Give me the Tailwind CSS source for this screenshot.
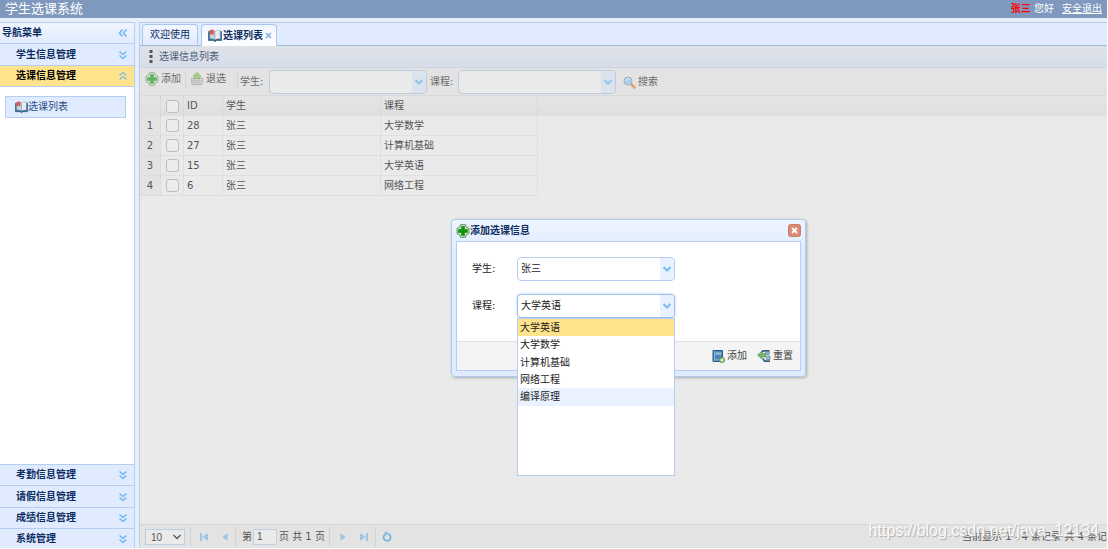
<!DOCTYPE html>
<html lang="zh-CN">
<head>
<meta charset="utf-8">
<title>学生选课系统</title>
<script src="https://cdn.jsdelivr.net/npm/@tailwindcss/browser@4"></script>
</head>
<body class="h-screen overflow-hidden bg-white pr-px pb-px font-['DejaVu_Sans','Noto_Sans_CJK_SC',sans-serif] text-[10px] leading-4 text-[#222]">
<svg class="hidden">
  <symbol id="chev" viewBox="0 0 10 8"><path d="M1.500 2 5 5.500 8.500 2" fill="none" stroke="currentColor" stroke-width="2"/></symbol>
  <symbol id="down2" viewBox="0 0 10 10"><path d="M1.500 1.500 5 4.500 8.500 1.500M1.500 5.500 5 8.500 8.500 5.500" fill="none" stroke="#72b8f2" stroke-width="1.600"/></symbol>
  <symbol id="plus" viewBox="0 0 14 14"><path d="M4.500.7h5L10 3l3 1.500v5L10 11l-.5 2.300h-5L4 11 1 9.500v-5L4 3z" fill="#d5ead2" stroke="#5d935d" stroke-width="1"/><path d="M5.500 2.500h3v3h3v3h-3v3h-3v-3h-3v-3h3z" fill="#0c960c" stroke="#0c800c" stroke-width=".6"/></symbol>
  <symbol id="book" viewBox="0 0 14 14"><path d="M.3 2.500v9h5.200l1.500 1.200 1.500-1.200h5.200v-9z" fill="#2d6791" stroke="#23547a" stroke-width=".6"/><path d="M1.800 1.500C4 1 6 1.500 7 2.500v8.200C5.500 9.700 3.500 9.600 1.800 10z" fill="#c9d8e4" stroke="#7893a8" stroke-width=".5"/><path d="M12.200 1.500C10 1 8 1.500 7 2.500v8.200c1.500-1 3.500-1.100 5.200-.7z" fill="#f2f4f5" stroke="#7893a8" stroke-width=".5"/><path d="M2 .8h3.800v5.400L3.900 4.900 2 6.200z" fill="#e4564d"/><path d="M8.500 4.500h2.500M8.500 6.500h2.500" stroke="#c5ced5" stroke-width=".7"/></symbol>
</svg>
<div class="flex h-full flex-col overflow-hidden bg-[#e6eef8]">
  <header class="flex h-[18px] shrink-0 items-center bg-[#7f99be] pr-[5px] pl-[5px] text-white">
    <h1 class="text-[13px]">学生选课系统</h1>
    <p class="ml-auto"><b class="text-[#f00]">张三</b> 您好</p>
    <a href="#" class="ml-2 underline">安全退出</a>
  </header>
  <div class="mt-1 flex min-h-0 flex-1 gap-1">
    <nav class="flex w-[135px] shrink-0 flex-col border-t border-r border-[#b5cdf0] bg-white font-bold text-[#0e2d5f]">
      <div class="flex h-[21px] shrink-0 items-center justify-between border-b border-[#b5cdf0] bg-linear-to-b from-[#f0f5ff] to-[#e0ebff] pr-[6px] pl-[2px]">导航菜单
        <button aria-label="收起"><svg class="size-[10px] rotate-90"><use href="#down2"/></svg></button></div>
      <button class="flex h-[22px] shrink-0 items-center justify-between border-b border-[#b5cdf0] bg-[#e0ebff] pr-[6px] pl-4">学生信息管理<svg class="size-[10px]"><use href="#down2"/></svg></button>
      <button class="flex h-[21px] shrink-0 items-center justify-between border-b border-[#b5cdf0] bg-[#ffe48d] pr-[6px] pl-4 text-black">选课信息管理<svg class="size-[10px] rotate-180 opacity-80"><use href="#down2"/></svg></button>
      <div class="flex-1 py-[9px] pr-2 pl-[5px]">
        <a href="#" class="flex h-[22px] items-center border border-[#b5cdf0] bg-[#e0ebff] pl-[9px] font-normal text-[#2c4d80]"><svg class="size-[13px]"><use href="#book"/></svg>选课列表</a>
      </div>
      <button class="flex h-[21px] shrink-0 items-center justify-between border-t border-[#b5cdf0] bg-[#e0ebff] pr-[6px] pl-4">考勤信息管理<svg class="size-[10px]"><use href="#down2"/></svg></button>
      <button class="flex h-[22px] shrink-0 items-center justify-between border-t border-[#b5cdf0] bg-[#e0ebff] pr-[6px] pl-4">请假信息管理<svg class="size-[10px]"><use href="#down2"/></svg></button>
      <button class="flex h-[21px] shrink-0 items-center justify-between border-t border-[#b5cdf0] bg-[#e0ebff] pr-[6px] pl-4">成绩信息管理<svg class="size-[10px]"><use href="#down2"/></svg></button>
      <button class="flex h-5 shrink-0 items-center justify-between border-t border-[#b5cdf0] bg-[#e0ebff] pr-[6px] pl-4">系统管理<svg class="size-[10px]"><use href="#down2"/></svg></button>
    </nav>
    <main class="flex min-w-0 flex-1 flex-col border-t border-l border-[#b5cdf0] bg-[#eaeaea] text-[#6a6a6a]">
      <div class="flex h-[23px] shrink-0 items-end gap-[3px] border-b border-[#a3b9da] bg-[#e0ebff] pl-[2px] text-[#0e2d5f]">
        <button class="h-[21px] rounded-t border border-b-0 border-[#aac6ee] bg-linear-to-b from-[#f2f7ff] to-[#e0ebff] px-[7px]">欢迎使用</button>
        <div class="-mb-px flex h-[22px] items-center rounded-t border border-b-0 border-[#aac6ee] bg-linear-to-b from-[#eff5ff] to-white pr-1 pl-[6px] font-bold">
          <svg class="mr-px size-[14px]"><use href="#book"/></svg>选课列表
          <button aria-label="关闭标签" class="ml-[2px] flex"><svg class="size-[7px]" viewBox="0 0 7 7"><path d="m1 1 5 5M6 1 1 6" stroke="#86a9d6" stroke-width="1.400"/></svg></button>
        </div>
      </div>
      <div class="flex h-[22px] shrink-0 items-center border-b border-[#ccd4df] bg-linear-to-b from-[#dfe2e8] to-[#d7dde9] pl-[9px] text-[#4b5c78]">
        <svg class="mr-[6px] h-[13px] w-1" viewBox="0 0 4 13"><path d="M.5 0h3v3h-3zM.5 5h3v3h-3zM.5 10h3v3h-3z" fill="#555"/></svg>选课信息列表</div>
      <div class="flex h-[28px] shrink-0 items-start border-b border-[#dadada] bg-[#e3e3e3] pt-[2px]">
        <button class="flex h-[18px] items-center pl-[5px]"><svg class="mr-[2px] size-[14px] opacity-60"><use href="#plus"/></svg>添加</button>
        <span class="mx-[4px] mt-px h-[18px] w-px bg-[#d2d2d2]"></span>
        <button class="flex h-[18px] items-center"><svg class="mr-[2px] size-[14px] opacity-70" viewBox="0 0 14 14"><path d="M1.200 6.500h11.600l-1 6.300H2.200z" fill="#d4d6d8" stroke="#888" stroke-width=".7"/><path d="M1.500 8.500h11M2 10.600h10M4.500 7l.3 5.500M7 7v5.500M9.500 7l-.3 5.500" stroke="#a0a2a4" stroke-width=".6"/><path d="M7 .5 10.800 4 9.500 6.500h-5L3.200 4z" fill="#8fc263" stroke="#6a9a4c" stroke-width=".6"/></svg>退选</button>
        <span class="mr-[2px] ml-[11px] mt-px h-[18px] w-px bg-[#d2d2d2]"></span>
        <label for="qs" class="w-[29px] whitespace-nowrap pt-[4px]">学生:</label>
        <div class="relative"><select id="qs" class="h-6 w-[158px] appearance-none rounded border border-[#bccde2] bg-[#eaeaea] pl-1"><option></option></select>
          <span class="pointer-events-none absolute top-px right-px flex h-[22px] w-[14px] items-center justify-center rounded-r bg-[#dbe3ef] text-[#91c5eb]"><svg class="h-2 w-[10px]"><use href="#chev"/></svg></span></div>
        <label for="qc" class="ml-[3px] w-[28px] whitespace-nowrap pt-[4px]">课程:</label>
        <div class="relative"><select id="qc" class="h-6 w-[158px] appearance-none rounded border border-[#bccde2] bg-[#eaeaea] pl-1"><option></option></select>
          <span class="pointer-events-none absolute top-px right-px flex h-[22px] w-[14px] items-center justify-center rounded-r bg-[#dbe3ef] text-[#91c5eb]"><svg class="h-2 w-[10px]"><use href="#chev"/></svg></span></div>
        <button class="ml-[7px] flex h-6 items-center"><svg class="mr-[2px] size-[13px]" viewBox="0 0 13 13"><path d="m8 8 3.500 3.500" stroke="#dda46b" stroke-width="2.600" stroke-linecap="round"/><circle cx="5" cy="5" r="4" fill="#a9d0f2" stroke="#a5aebb"/><path d="M2.500 4.500Q3.500 2 6 2.500" stroke="#dceefa" fill="none"/></svg>搜索</button>
      </div>
      <div class="min-h-0 flex-1">
        <div class="bg-linear-to-b from-[#e5e5e5] from-0% to-[#dfdfdf] to-[20px] bg-no-repeat [background-size:100%_20px]">
        <table class="w-[398px] table-fixed border-separate border-spacing-0 text-left text-[#555]">
          <colgroup><col class="w-[21px]"><col class="w-[23px]"><col class="w-[39px]"><col class="w-[158px]"><col class="w-[157px]"></colgroup>
          <thead><tr class="h-5 *:border-r *:border-dotted *:border-[#d2d2d2] *:p-0 *:font-normal">
            <th></th><th><input type="checkbox" aria-label="全选" class="mx-auto block size-[13px] appearance-none rounded-[3px] border border-[#bdbdbd] bg-[#ededed]"></th><th><span class="pl-[3px]">ID</span></th><th><span class="pl-[3px]">学生</span></th><th><span class="pl-[3px]">课程</span></th></tr></thead>
          <tbody class="bg-[#eaeaea]">
            <tr class="h-5 *:border-r *:border-b *:border-dotted *:border-[#d5d5d5] *:p-0"><td class="bg-[#e3e3e3] text-center">1</td><td><input type="checkbox" aria-label="选择 28" class="mx-auto block size-[13px] appearance-none rounded-[3px] border border-[#bdbdbd] bg-[#ededed]"></td><td><span class="pl-[3px]">28</span></td><td><span class="pl-[3px]">张三</span></td><td><span class="pl-[3px]">大学数学</span></td></tr>
            <tr class="h-5 *:border-r *:border-b *:border-dotted *:border-[#d5d5d5] *:p-0"><td class="bg-[#e3e3e3] text-center">2</td><td><input type="checkbox" aria-label="选择 27" class="mx-auto block size-[13px] appearance-none rounded-[3px] border border-[#bdbdbd] bg-[#ededed]"></td><td><span class="pl-[3px]">27</span></td><td><span class="pl-[3px]">张三</span></td><td><span class="pl-[3px]">计算机基础</span></td></tr>
            <tr class="h-5 *:border-r *:border-b *:border-dotted *:border-[#d5d5d5] *:p-0"><td class="bg-[#e3e3e3] text-center">3</td><td><input type="checkbox" aria-label="选择 15" class="mx-auto block size-[13px] appearance-none rounded-[3px] border border-[#bdbdbd] bg-[#ededed]"></td><td><span class="pl-[3px]">15</span></td><td><span class="pl-[3px]">张三</span></td><td><span class="pl-[3px]">大学英语</span></td></tr>
            <tr class="h-5 *:border-r *:border-b *:border-dotted *:border-[#d5d5d5] *:p-0"><td class="bg-[#e3e3e3] text-center">4</td><td><input type="checkbox" aria-label="选择 6" class="mx-auto block size-[13px] appearance-none rounded-[3px] border border-[#bdbdbd] bg-[#ededed]"></td><td><span class="pl-[3px]">6</span></td><td><span class="pl-[3px]">张三</span></td><td><span class="pl-[3px]">网络工程</span></td></tr>
          </tbody>
        </table>
        </div>
      </div>
      <footer class="relative flex h-6 shrink-0 items-center overflow-hidden border-t border-[#d6d6d6] bg-[#e3e3e3] pl-[5px] whitespace-nowrap text-[#555]">
        <div class="relative"><select aria-label="每页条数" class="block h-4 w-10 appearance-none border border-[#b8cce4] bg-[#eaeaea] pl-[5px] font-['Liberation_Sans',sans-serif]"><option>10</option></select>
          <svg class="pointer-events-none absolute top-1 right-[3px] h-2 w-[10px]" viewBox="0 0 10 8"><path d="M1.500 2 5 5.500 8.500 2" fill="none" stroke="#555" stroke-width="1.300"/></svg></div>
        <span class="ml-[5px] h-[19px] w-px bg-[#d2d2d2]"></span>
        <button aria-label="首页" class="ml-2"><svg class="block size-[10px]" viewBox="0 0 10 10"><path d="M1 1h2v8H1zM9 1v8L3.500 5z" fill="#9cc6e2"/></svg></button>
        <button aria-label="上一页" class="ml-[11px]"><svg class="block size-[10px]" viewBox="0 0 10 10"><path d="M7.500 1v8L2.500 5z" fill="#9cc6e2"/></svg></button>
        <span class="ml-[5px] h-[19px] w-px bg-[#d2d2d2]"></span>
        <label for="pg" class="ml-[6px]">第</label>
        <input id="pg" value="1" class="ml-px h-4 w-6 border border-[#c3d0e0] bg-[#eaeaea] pl-[3px] font-['Liberation_Sans',sans-serif]">
        <span class="ml-[2px]">页 共 1 页</span>
        <span class="ml-[4px] h-[19px] w-px bg-[#d2d2d2]"></span>
        <button aria-label="下一页" class="ml-2"><svg class="block size-[10px]" viewBox="0 0 10 10"><path d="M2.500 1v8l5-4z" fill="#9cc6e2"/></svg></button>
        <button aria-label="末页" class="ml-[11px]"><svg class="block size-[10px]" viewBox="0 0 10 10"><path d="M7 1h2v8H7zM1 1v8l5.500-4z" fill="#9cc6e2"/></svg></button>
        <span class="ml-[6px] h-[19px] w-px bg-[#d2d2d2]"></span>
        <button aria-label="刷新" class="ml-[6px]"><svg class="block size-[10px]" viewBox="0 0 10 10"><path d="M6.300 2A3.500 3.500 0 1 1 3.300 2.300" fill="none" stroke="#6db0dd" stroke-width="1.700"/><path d="M2 .3h3.500v3.500z" fill="#6db0dd"/></svg></button>
        <span class="-mr-[10px] ml-auto">当前显示 1 - 4 条记录 共 4 条记录</span>
      </footer>
    </main>
  </div>
</div>
<div class="pointer-events-none absolute right-[9px] bottom-[8px] font-['Liberation_Sans',sans-serif] text-[16px] leading-5 text-white/90 [text-shadow:1px_1px_1px_#aaa]">https://blog.csdn.net/java_12134</div>

<div role="dialog" aria-labelledby="dt" class="absolute top-[219px] left-[451px] w-[355px] rounded border border-[#b0cbef] bg-linear-to-b from-[#eff5ff] to-[#e0ebff] to-20% px-1 pb-[5px] shadow-[1px_1px_3px_#aaa]">
  <div class="flex h-[21px] items-center text-[#0e2d5f]">
    <svg class="size-[14px]"><use href="#plus"/></svg><h2 id="dt" class="font-bold">添加选课信息</h2>
    <button aria-label="关闭" class="ml-auto"><svg class="block size-[13px]" viewBox="0 0 13 13"><rect x=".5" y=".5" width="12" height="12" rx="2" fill="#d98b74" stroke="#c97d68"/><path d="m4 4 5 5M9 4 4 9" stroke="#fff" stroke-width="1.800"/></svg></button>
  </div>
  <form class="border border-[#b5cdf0] bg-white">
    <div class="flex h-[99px] flex-col gap-[13px] pt-[15px] pl-[15px]">
      <div class="flex items-center"><label for="fs" class="w-[45px]">学生:</label>
        <div class="relative"><select id="fs" class="block h-6 w-[158px] appearance-none rounded border border-[#b5cdf0] bg-white pl-[3px]"><option>张三</option></select>
          <span class="pointer-events-none absolute top-px right-px flex h-[22px] w-[14px] items-center justify-center rounded-r bg-[#e8f1ff] text-[#77bdf0]"><svg class="h-2 w-[10px]"><use href="#chev"/></svg></span></div></div>
      <div class="flex items-center"><label for="fc" class="w-[45px]">课程:</label>
        <div class="relative"><select id="fc" class="block h-6 w-[158px] appearance-none rounded border border-[#9dbfec] bg-white pl-[3px] shadow-[0_0_3px_#b5cdf0]"><option>大学英语</option></select>
          <span class="pointer-events-none absolute top-px right-px flex h-[22px] w-[14px] items-center justify-center rounded-r bg-[#e8f1ff] text-[#77bdf0]"><svg class="h-2 w-[10px]"><use href="#chev"/></svg></span>
          <ul role="listbox" aria-label="课程选项" class="absolute top-6 left-0 h-[158px] w-[158px] border border-[#b5cdf0] bg-white *:pl-[2px]">
            <li role="option" aria-selected="true" class="h-[17px] bg-[#ffe48d] leading-[17px]">大学英语</li>
            <li role="option" class="h-[18px] leading-[18px]">大学数学</li>
            <li role="option" class="h-[17px] leading-[17px]">计算机基础</li>
            <li role="option" class="h-[17px] leading-[17px]">网络工程</li>
            <li role="option" class="h-[18px] bg-[#eaf2ff] leading-[18px]">编译原理</li>
          </ul></div></div>
    </div>
    <div class="flex h-[29px] items-center justify-end gap-[10px] border-t border-[#e2e2e2] bg-[#f4f4f4] pr-[7px] text-[#444]">
      <button type="button" class="flex items-center"><svg class="mr-[2px] size-[13px]" viewBox="0 0 13 13"><path d="M1 .5h9.500v11H1z" fill="#4984b9" stroke="#275888"/><path d="M3.500 2.300h6v2.500h-6z" fill="#8fb8dc"/><path d="M2.500 1v10M3 9.800h7" stroke="#a9c7df" stroke-width=".8"/><circle cx="10" cy="10" r="2.800" fill="#79b75c" stroke="#568d40" stroke-width=".5"/><path d="M8.500 10h3M10 8.500v3" stroke="#fff"/></svg>添加</button>
      <button type="button" class="flex items-center"><svg class="mr-[2px] size-[14px]" viewBox="0 0 14 14"><path d="M4.500 3.500 6 1.800h6.500M6 9.500l1.500 2.700H13" fill="none" stroke="#35617f" stroke-width="1.700"/><path d="M8.500 3h4L12 5.500H9zM9 8.500l1-1.500h3v3.500H9.500z" fill="#9cbccd" stroke="#4b7893" stroke-width=".6"/><path d="M.5 6 4.800 2.500v2h4v3.500h-4v2z" fill="#76b86a" stroke="#4e8f48" stroke-width=".6"/></svg>重置</button>
    </div>
  </form>
</div>
</body>
</html>
